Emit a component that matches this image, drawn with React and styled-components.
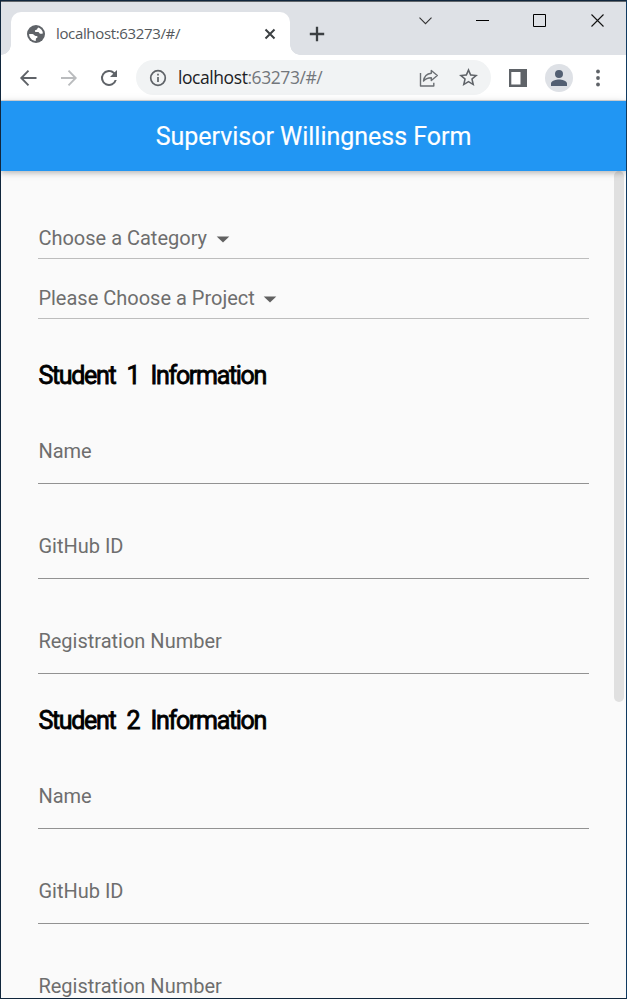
import React from "react";
import styled, { createGlobalStyle } from "styled-components";

const GlobalStyle = createGlobalStyle`
  *, *::before, *::after { box-sizing: border-box; }
  body { margin: 0; background: #fafafa; overflow: hidden; }
`;

const Window = styled.div`
  width: 627px;
  height: 999px;
  display: flex;
  flex-direction: column;
  overflow: hidden;
  background: #fafafa;
  border: 1px solid #10263c;
  border-right-color: #0f3a61;
  font-family: Roboto, sans-serif;
`;

const TabStrip = styled.header`
  height: 54px;
  flex: none;
  display: flex;
  align-items: flex-end;
  background: #dee1e6;
  border-top: 1px solid #61666b;
`;

const Tab = styled.div`
  position: relative;
  width: 279px;
  height: 43px;
  margin-left: 10px;
  padding: 0 14px 0 16px;
  display: flex;
  align-items: center;
  background: #fff;
  border-radius: 10px 10px 0 0;

  &::before, &::after {
    content: "";
    position: absolute;
    bottom: 0;
    width: 10px;
    height: 10px;
  }
  &::before {
    left: -10px;
    background: radial-gradient(circle at 0 0, #dee1e6 9.5px, #fff 10px);
  }
  &::after {
    right: -10px;
    background: radial-gradient(circle at 100% 0, #dee1e6 9.5px, #fff 10px);
  }
`;

const TabTitle = styled.span`
  flex: 1;
  margin-left: 11px;
  padding-bottom: 1px;
  font: 400 15px/20px "Open Sans", sans-serif;
  letter-spacing: -0.35px;
  color: #54585c;
`;

const NewTab = styled.div`
  width: 18px;
  height: 43px;
  margin-left: 19px;
  display: flex;
  align-items: center;
`;

const WindowControls = styled.div`
  display: flex;
  align-self: flex-start;
  align-items: center;
  gap: 44px;
  height: 37px;
  margin-left: auto;
  padding-right: 22px;

  svg:last-child {
    margin-left: 1px;
  }
`;

const Toolbar = styled.nav`
  height: 46px;
  flex: none;
  display: flex;
  align-items: center;
  padding: 0 17px 0 17px;
  background: #fff;
  border-bottom: 1px solid #d9dbdd;
`;

const NavButtons = styled.div`
  display: flex;
  gap: 20.500px;
  margin-right: 17px;
`;

const AddressBar = styled.div`
  width: 355px;
  height: 35px;
  display: flex;
  align-items: center;
  padding: 0 13px;
  background: #f1f3f4;
  border-radius: 18px;
`;

const Url = styled.span`
  flex: 1;
  margin-left: 11px;
  padding-bottom: 1px;
  font: 400 17.5px/24px "Open Sans", sans-serif;
  letter-spacing: -0.43px;
  color: #73777c;
`;

const Host = styled.span`
  color: #202124;
`;

const AddressActions = styled.div`
  display: flex;
  align-items: center;
  gap: 20px;
`;

const ToolbarActions = styled.div`
  flex: 1;
  display: flex;
  align-items: center;
  margin-left: 18px;
`;

const Avatar = styled.div`
  width: 28px;
  height: 28px;
  margin: 0 15px 0 18px;
  display: flex;
  align-items: center;
  justify-content: center;
  border-radius: 50%;
  background: #dee1e6;
`;

const Icon = styled.svg`
  display: block;
  flex: none;
  overflow: visible;
`;

const AppBar = styled.div`
  position: relative;
  z-index: 1;
  flex: none;
  height: 70px;
  display: flex;
  align-items: center;
  justify-content: center;
  background: #2196f3;
  box-shadow: 0 2px 5px rgba(0, 0, 0, 0.2), 0 1px 10px rgba(0, 0, 0, 0.1);
`;

const AppTitle = styled.h1`
  margin: 0;
  padding-top: 2px;
  font-size: 25px;
  font-weight: 400;
  line-height: 30px;
  letter-spacing: -0.02px;
  color: #fff;
  -webkit-text-stroke: 0.15px #fff;
`;

const Viewport = styled.main`
  flex: 1;
  min-height: 0;
  display: flex;
  justify-content: space-between;
  padding-right: 2.5px;
  overflow: hidden;
`;

const Form = styled.form`
  width: 550.6px;
  margin-left: 37.4px;
  padding-top: 28px;
`;

const ScrollThumb = styled.div`
  width: 10px;
  height: 531px;
  border-radius: 5px;
  background: #e0e0e0;
`;

const SelectRow = styled.div`
  height: 60px;
  display: flex;
  align-items: flex-start;
  padding-top: 27px;
  border-bottom: 1px solid #bdbdbd;
`;

const Label = styled.span`
  font-size: 20px;
  line-height: 24px;
  color: #6e6e6e;
  white-space: pre;
`;

const DropIcon = styled(Icon)`
  margin: 10px 0 0 8.5px;
`;

const Section = styled.section`
  margin-top: ${(p) => (p.$first ? "10px" : "0")};
`;

const Heading = styled.h2`
  height: 60px;
  margin: 0;
  padding-top: 32px;
  font-size: 25px;
  font-weight: 400;
  line-height: 30px;
  letter-spacing: -1.3px;
  word-spacing: 6.25px;
  color: #000;
  -webkit-text-stroke: 0.8px #000;
`;

const Field = styled.div`
  height: 95px;
  padding-top: 50px;
  border-bottom: 1px solid #929292;
`;

const GlobeIcon = () => (
  <Icon width="18" height="18" viewBox="0 0 18 18">
    <circle cx="9" cy="9" r="9" fill="#5f6368" />
    <path d="M2.100 9h3.200c1.600 0 1.900 1.800 3.400 1.900 1.300.1 2.200.2 1.800 1.400-.3 1-1.400.6-1.600 1.700l-.2 1.900C5 15.800 2.200 12.900 2.100 9zM11.400 2.600c2.500.9 4.300 3 4.500 5.600-.9.800-2.200.9-3.200.2-.8-.5-.5-1.300-1.500-1.400-1.300-.1-2.700.4-3.200-.5-.5-1 .5-1.500 1.500-1.700 1.200-.3.500-1.500 1.900-2.200z" fill="#fff" />
  </Icon>
);

const Line = ({ d, w = 18, h = 18, color = "#5f6368", stroke = 2, ...rest }) => (
  <Icon width={w} height={h} viewBox={`0 0 ${w} ${h}`} fill="none" stroke={color} strokeWidth={stroke} {...rest}>
    <path d={d} />
  </Icon>
);

const SelectField = ({ children }) => (
  <SelectRow>
    <Label>{children}</Label>
    <DropIcon width="14" height="7" viewBox="0 0 14 7" fill="#616161">
      <path d="M.7.5h12.600L7 6.500z" />
    </DropIcon>
  </SelectRow>
);

const fields = ["Name", "GitHub ID", "Registration Number"];

const Student = ({ number, first }) => (
  <Section $first={first}>
    <Heading>Student {number} Information</Heading>
    {fields.map((field) => (
      <Field key={field}>
        <Label>{field}</Label>
      </Field>
    ))}
  </Section>
);

export default function App() {
  return (
    <>
      <GlobalStyle />
      <Window>
        <TabStrip>
          <Tab>
            <GlobeIcon />
            <TabTitle>localhost:63273/#/</TabTitle>
            <Line w={12} h={12} d="M1.500 1.500l9 9M10.500 1.500l-9 9" color="#3c4043" />
          </Tab>
          <NewTab>
            <Line w={16} h={16} d="M8 .8v14.400M.8 8h14.400" color="#3c4043" stroke={2.3} />
          </NewTab>
          <WindowControls>
            <Line w={13} h={8} d="M.5.7l6 6 6-6" color="#333" stroke={1.1} />
            <Line w={13} h={1} d="M0 .5h13" color="#000" stroke={1} />
            <Line w={13} h={13} d="M.5.5h12v12h-12z" color="#000" stroke={1} />
            <Line w={13} h={13} d="M.5.5l12 12M12.500.5l-12 12" color="#111" stroke={1.1} />
          </WindowControls>
        </TabStrip>
        <Toolbar>
          <NavButtons>
            <Line w={20} h={20} d="M18.500 10H4M10.500 2.700L3.300 10l7.200 7.300" stroke={1.9} />
            <Line w={20} h={20} d="M2 10h14.500M9.500 2.700l7.200 7.300-7.200 7.300" color="#babcbe" stroke={1.9} />
            <Icon width="20" height="20" viewBox="2 2 20 20" fill="#5f6368">
              <path d="M17.650 6.350A8 8 0 1 0 19.730 14h-2.080A6 6 0 1 1 12 6c1.660 0 3.140.69 4.220 1.780L13 11h7V4z" />
            </Icon>
          </NavButtons>
          <AddressBar>
            <Icon width="18" height="18" viewBox="0 0 18 18" fill="none" stroke="#5f6368" strokeWidth="1.7">
              <circle cx="9" cy="9" r="7.300" />
              <path d="M9 8v5M9 4.800v1.800" />
            </Icon>
            <Url>
              <Host>localhost</Host>:63273/#/
            </Url>
            <AddressActions>
              <Icon width="20" height="18" viewBox="0 0 20 18" fill="none" stroke="#6b6f73" strokeWidth="1.4" strokeLinejoin="round">
                <path d="M1.500 4v13h13.300v-3.200" />
                <path d="M12.300 1.500l6 5-6 5V8.700c-3.500 0-5.800.9-7.800 3.400.6-4.400 3.400-7.500 7.800-7.900z" />
              </Icon>
              <Icon width="19" height="19" viewBox="2 2 20 20" fill="#5f6368">
                <path d="M22 9.240l-7.190-.62L12 2 9.190 8.630 2 9.240l5.460 4.730L5.820 21 12 17.270 18.180 21l-1.630-7.030L22 9.240zM12 15.400l-3.760 2.270 1-4.280-3.320-2.880 4.380-.38L12 6.100l1.710 4.040 4.380.38-3.320 2.880 1 4.280L12 15.400z" />
              </Icon>
            </AddressActions>
          </AddressBar>
          <ToolbarActions>
            <Icon width="18" height="18" viewBox="0 0 18 18" fill="#5f6368">
              <path fillRule="evenodd" d="M0 0h18v18H0zM2.300 3v12.500h9.200V3z" />
            </Icon>
            <Avatar>
              <Icon width="16" height="16" viewBox="4 4 16 16" fill="#525f72">
                <path d="M12 12a4 4 0 1 0 0-8 4 4 0 0 0 0 8zm0 1.500c-2.670 0-8 1.340-8 4V20h16v-2.500c0-2.660-5.330-4-8-4z" />
              </Icon>
            </Avatar>
            <Icon width="20" height="18" viewBox="0 0 20 18" fill="#5f6368">
              <circle cx="10" cy="2.500" r="1.900" />
              <circle cx="10" cy="9" r="1.900" />
              <circle cx="10" cy="15.500" r="1.900" />
            </Icon>
          </ToolbarActions>
        </Toolbar>
        <AppBar>
          <AppTitle>Supervisor Willingness Form</AppTitle>
        </AppBar>
        <Viewport>
          <Form>
            <SelectField>Choose a Category</SelectField>
            <SelectField>Please Choose a Project</SelectField>
            <Student number={1} first />
            <Student number={2} />
          </Form>
          <ScrollThumb />
        </Viewport>
      </Window>
    </>
  );
}
